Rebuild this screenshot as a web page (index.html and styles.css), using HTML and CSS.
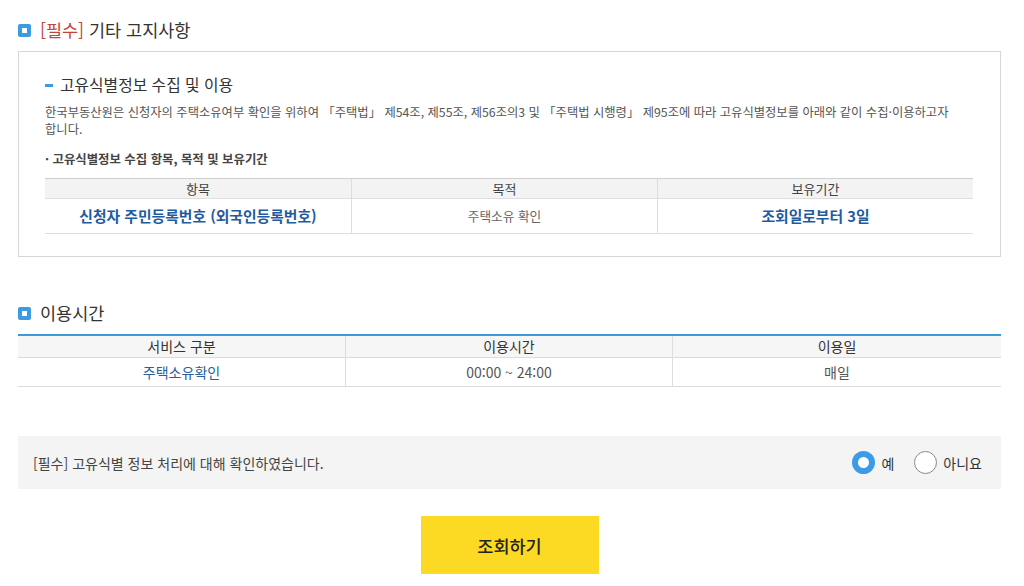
FILE: index.html
```html
<!DOCTYPE html>
<html lang="ko">
<head>
<meta charset="utf-8">
<link rel="stylesheet" href="styles.css">
</head>
<body>
<div class="page">
  <h2 class="sec-title"><span class="sq"></span><span class="req">[필수]</span>&nbsp;기타 고지사항</h2>
  <div class="notice">
    <h3 class="sub-title"><span class="dash"></span>고유식별정보 수집 및 이용</h3>
    <p class="desc">한국부동산원은 신청자의 주택소유여부 확인을 위하여 「주택법」 제54조, 제55조, 제56조의3 및 「주택법 시행령」 제95조에 따라 고유식별정보를 아래와 같이 수집·이용하고자 합니다.</p>
    <p class="bullet">· 고유식별정보 수집 항목, 목적 및 보유기간</p>
    <div class="tbl1">
      <div class="th">항목</div>
      <div class="th">목적</div>
      <div class="th">보유기간</div>
      <div class="td strong">신청자 주민등록번호 (외국인등록번호)</div>
      <div class="td muted">주택소유 확인</div>
      <div class="td strong">조회일로부터 3일</div>
    </div>
  </div>

  <h2 class="sec-title sec2"><span class="sq"></span>이용시간</h2>
  <div class="tbl2">
    <div class="th">서비스 구분</div>
    <div class="th">이용시간</div>
    <div class="th">이용일</div>
    <div class="td link">주택소유확인</div>
    <div class="td">00:00 ~ 24:00</div>
    <div class="td">매일</div>
  </div>

  <div class="confirm">
    <span class="confirm-text">[필수] 고유식별 정보 처리에 대해 확인하였습니다.</span>
    <div class="radios">
      <label class="radio"><span class="circle on"></span>예</label>
      <label class="radio"><span class="circle"></span>아니요</label>
    </div>
  </div>

  <div class="actions">
    <button class="btn">조회하기</button>
  </div>
</div>
</body>
</html>
```

FILE: styles.css
```css
* { box-sizing: border-box; }
html, body { margin: 0; padding: 0; background: #fff; }
body {
  font-family: "Noto Sans CJK KR", "Noto Sans", sans-serif;
  color: #333;
}
.page {
  width: 983px;
  margin-left: 18px;
  padding-top: 18px;
}
.sec-title {
  margin: 0;
  height: 24px;
  line-height: 24px;
  font-size: 17.5px;
  font-weight: 400;
  color: #333;
  display: flex;
  align-items: center;
}
.sq {
  width: 13px;
  height: 13px;
  background: #3c9be0;
  border-radius: 2px;
  margin-right: 9px;
  position: relative;
  flex: none;
}
.sq::after {
  content: "";
  position: absolute;
  left: 4px;
  top: 4px;
  width: 5px;
  height: 5px;
  background: #fff;
}
.req { color: #c3443e; }
.notice {
  margin-top: 9px;
  border: 1px solid #d6d6d6;
  padding: 23px 27px 22px 26px;
}
.sub-title {
  margin: 0;
  font-size: 15.8px;
  font-weight: 400;
  line-height: 20px;
  color: #333;
  display: flex;
  align-items: center;
}
.dash {
  width: 8px;
  height: 3px;
  background: #3c9be0;
  margin-right: 7px;
}
.desc {
  margin: 9px 0 0;
  font-size: 12.3px;
  line-height: 17px;
  color: #555;
  word-break: keep-all;
}
.bullet {
  margin: 13px 0 0;
  font-size: 12.4px;
  line-height: 17px;
  font-weight: 600;
  color: #444;
}
.tbl1 {
  margin-top: 10px;
  display: grid;
  grid-template-columns: 307px 306px 1fr;
  border-top: 1px solid #cfcfcf;
}
.tbl1 .th {
  height: 20px;
  line-height: 19px;
  background: #f3f3f3;
  border-bottom: 1px solid #dedede;
  text-align: center;
  font-size: 13px;
  color: #444;
}
.tbl1 .td {
  height: 35px;
  line-height: 34px;
  border-bottom: 1px solid #dedede;
  text-align: center;
  font-size: 12.7px;
  color: #666;
}
.tbl1 .th:not(:nth-child(3n)),
.tbl1 .td:not(:nth-child(3n)),
.tbl2 .th:not(:nth-child(3n)),
.tbl2 .td:not(:nth-child(3n)) {
  border-right: 1px solid #dedede;
}
.tbl1 .td.strong {
  font-size: 14.8px;
  font-weight: 700;
  color: #1f5b9f;
}
.sec2 { margin-top: 44px; }
.tbl2 {
  margin-top: 9px;
  display: grid;
  grid-template-columns: 328px 327px 1fr;
  border-top: 2px solid #3d9ad9;
}
.tbl2 .th {
  height: 22px;
  line-height: 21px;
  background: #f6f6f6;
  border-bottom: 1px solid #dcdcdc;
  text-align: center;
  font-size: 14px;
  color: #333;
}
.tbl2 .td {
  height: 29px;
  line-height: 28px;
  border-bottom: 1px solid #dcdcdc;
  text-align: center;
  font-size: 14px;
  color: #555;
}
.tbl2 .td.link { color: #2a5fa0; }
.confirm {
  margin-top: 49px;
  height: 53px;
  background: #f4f4f4;
  display: flex;
  align-items: center;
  justify-content: space-between;
  padding: 0 19px 0 15px;
}
.confirm-text {
  font-size: 14px;
  color: #444;
}
.radios {
  display: flex;
  align-items: center;
  gap: 20px;
}
.radio {
  display: flex;
  align-items: center;
  font-size: 14px;
  color: #333;
}
.circle {
  width: 23px;
  height: 23px;
  border-radius: 50%;
  border: 1px solid #888;
  background: #fff;
  margin-right: 6px;
}
.circle.on {
  border: 6px solid #3c9be8;
}
.actions {
  margin-top: 27px;
  display: flex;
  justify-content: center;
}
.btn {
  width: 178px;
  height: 58px;
  border: 0;
  background: #fcd923;
  font-family: "Noto Sans CJK KR", "Noto Sans", sans-serif;
  font-size: 17.5px;
  font-weight: 500;
  color: #222;
  cursor: pointer;
}
```
